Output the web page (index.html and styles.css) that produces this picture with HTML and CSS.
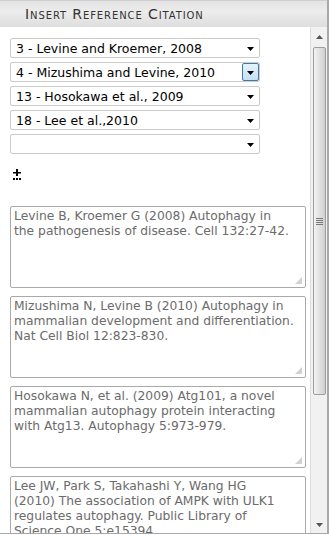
FILE: index.html
```html
<!DOCTYPE html>
<html>
<head>
<meta charset="utf-8">
<link rel="stylesheet" href="styles.css">
</head>
<body>
<div class="panel">
  <div class="header">Insert Reference Citation</div>
  <div class="body">
    <div class="content">
      <div class="selects">
        <div class="select"><span>3 - Levine and Kroemer, 2008</span><span class="arrow"><svg width="7" height="4" viewBox="0 0 7 4"><path d="M0 0H7L3.5 4Z" fill="#000"/></svg></span></div>
        <div class="select"><span>4 - Mizushima and Levine, 2010</span><span class="arrow focus"><svg width="7" height="4" viewBox="0 0 7 4"><path d="M0 0H7L3.5 4Z" fill="#000"/></svg></span></div>
        <div class="select"><span>13 - Hosokawa et al., 2009</span><span class="arrow"><svg width="7" height="4" viewBox="0 0 7 4"><path d="M0 0H7L3.5 4Z" fill="#000"/></svg></span></div>
        <div class="select"><span>18 - Lee et al.,2010</span><span class="arrow"><svg width="7" height="4" viewBox="0 0 7 4"><path d="M0 0H7L3.5 4Z" fill="#000"/></svg></span></div>
        <div class="select"><span></span><span class="arrow"><svg width="7" height="4" viewBox="0 0 7 4"><path d="M0 0H7L3.5 4Z" fill="#000"/></svg></span></div>
      </div>
      <div class="add"><svg width="10" height="12" viewBox="0 0 10 12"><path d="M4 0H6V3H9V4.5H6V7H4V4.5H1V3H4Z" fill="#000"/><rect x="1" y="9" width="2" height="2" fill="#000"/><rect x="4" y="9" width="2" height="2" fill="#000"/><rect x="7" y="9" width="2" height="2" fill="#000"/></svg></div>
      <div class="refs">
        <div class="ref">Levine B, Kroemer G (2008) Autophagy in<br>the pathogenesis of disease. Cell 132:27-42.<span class="grip"></span></div>
        <div class="ref">Mizushima N, Levine B (2010) Autophagy in<br>mammalian development and differentiation.<br>Nat Cell Biol 12:823-830.<span class="grip"></span></div>
        <div class="ref">Hosokawa N, et al. (2009) Atg101, a novel<br>mammalian autophagy protein interacting<br>with Atg13. Autophagy 5:973-979.<span class="grip"></span></div>
        <div class="ref">Lee JW, Park S, Takahashi Y, Wang HG<br>(2010) The association of AMPK with ULK1<br>regulates autophagy. Public Library of<br>Science One 5:e15394.<span class="grip"></span></div>
      </div>
    </div>
    <div class="scrollbar">
      <div class="sb-btn top"><svg width="7" height="4" viewBox="0 0 7 4"><path d="M3.5 0L7 4H0Z" fill="#555"/></svg></div>
      <div class="thumb"><div class="grips"><i></i><i></i><i></i><i></i></div></div>
      <div class="track"></div>
      <div class="sb-btn"><svg width="7" height="4" viewBox="0 0 7 4"><path d="M0 0H7L3.5 4Z" fill="#555"/></svg></div>
    </div>
  </div>
</div>
</body>
</html>
```
FILE: styles.css
```css
html, body { margin: 0; padding: 0; background: #fff; }
body { width: 329px; height: 535px; overflow: hidden; }
.panel {
  box-sizing: border-box;
  width: 329px;
  height: 534px;
  border-right: 2px solid #a8a8a8;
  border-bottom: 1px solid #a8a8a8;
  display: flex;
  flex-direction: column;
}
.header {
  height: 27px;
  box-sizing: border-box;
  border-top: 1px solid #cfcfcf;
  background: linear-gradient(#e2e2e2, #ececec 40%, #dedede);
  font-family: "DejaVu Sans", sans-serif;
  font-size: 14px;
  line-height: 16px;
  font-variant: small-caps;
  color: #333;
  padding: 5px 0 0 25px;
  letter-spacing: 0.9px;
}
.body { flex: 1; display: flex; min-height: 0; }
.content {
  flex: 1;
  overflow: hidden;
  padding: 11px 0 0 10px;
  font-family: "DejaVu Sans", sans-serif;
  font-size: 12px;
}
.selects { display: flex; flex-direction: column; gap: 4px; width: 250px; }
.select {
  height: 20px;
  box-sizing: border-box;
  border: 1px solid #cbcbcb;
  border-radius: 2px;
  display: flex;
  justify-content: space-between;
  align-items: center;
  padding-left: 5px;
  color: #000;
  font-size: 12.5px;
}
.arrow {
  width: 17px;
  height: 18px;
  box-sizing: border-box;
  display: flex;
  align-items: center;
  justify-content: center;
  padding-top: 1px;
}
.arrow.focus {
  border: 1px solid #3d7bad;
  border-radius: 2px;
  background: linear-gradient(#e5f3fb, #c4e0f4);
}
.add { margin: 15px 0 0 2px; height: 12px; }
.add svg { display: block; }
.refs { margin-top: 25px; display: flex; flex-direction: column; gap: 8px; width: 296px; }
.ref {
  position: relative;
  height: 82px;
  box-sizing: border-box;
  border: 1px solid #a9a9a9;
  border-radius: 2px;
  padding: 2px 2px 1px 3px;
  color: #6b6b6b;
  line-height: 15px;
  font-size: 12.3px;
  white-space: nowrap;
  overflow: hidden;
  flex: none;
}
.grip {
  position: absolute;
  right: 3px;
  bottom: 3px;
  width: 7px;
  height: 7px;
  background:
    radial-gradient(circle, #b8b8b8 0.6px, transparent 0.9px) 0 0 / 2px 2px;
  clip-path: polygon(100% 0, 100% 100%, 0 100%);
}
.scrollbar {
  width: 16px;
  border-left: 1px solid #dcdcdc;
  background: #f1f1f1;
  display: flex;
  flex-direction: column;
  align-items: center;
}
.sb-btn { height: 17px; display: flex; align-items: center; justify-content: center; width: 100%; }
.sb-btn.top { height: 20px; }
.thumb {
  width: 13px;
  height: 348px;
  box-sizing: border-box;
  border: 1px solid #9e9e9e;
  border-radius: 2px;
  background: linear-gradient(90deg, #f2f2f2, #dedede 60%, #cfcfcf);
  display: flex;
  align-items: center;
  justify-content: center;
}
.grips { display: flex; flex-direction: column; gap: 1px; }
.grips i { display: block; width: 7px; height: 1px; background: #777; }
.track { flex: 1; }
```
